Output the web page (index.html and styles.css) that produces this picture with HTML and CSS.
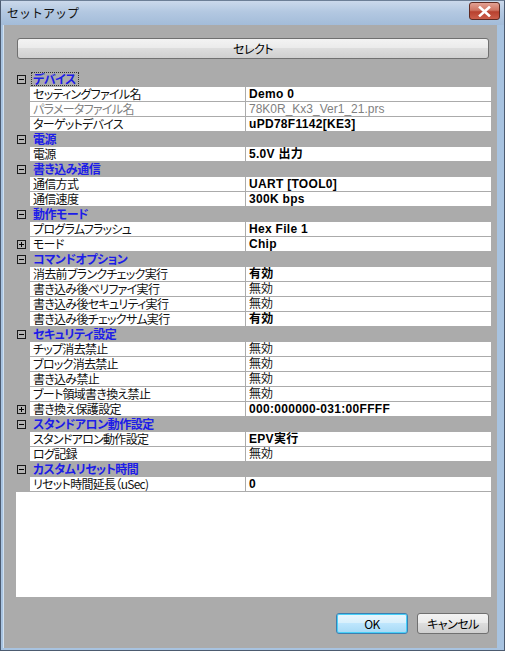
FILE: index.html
```html
<!DOCTYPE html>
<html lang="ja">
<head>
<meta charset="utf-8">
<title>セットアップ</title>
<link rel="stylesheet" href="styles.css">
</head>
<body>
<div class="window">
  <div class="titlebar">
    <span class="title">セットアップ</span>
    <div class="close">
      <svg width="13" height="11" viewBox="0 0 13 11"><path d="M2 1.5 L11 9.5 M11 1.5 L2 9.5" stroke="#ffffff" stroke-width="2.6" stroke-linecap="square"/></svg>
    </div>
  </div>
  <div class="client">
    <div class="btn select">セレクト</div>
    <div class="grid">
      <div class="row cat"><span class="gutter"><span class="box minus"></span></span><span class="catlabel focus">デバイス</span></div>
      <div class="row"><span class="gutter"></span><span class="name">セッティングファイル名</span><span class="value b">Demo 0</span></div>
      <div class="row"><span class="gutter"></span><span class="name dim">パラメータファイル名</span><span class="value dim">78K0R_Kx3_Ver1_21.prs</span></div>
      <div class="row"><span class="gutter"></span><span class="name">ターゲットデバイス</span><span class="value b">uPD78F1142[KE3]</span></div>
      <div class="row cat"><span class="gutter"><span class="box minus"></span></span><span class="catlabel">電源</span></div>
      <div class="row"><span class="gutter"></span><span class="name">電源</span><span class="value b">5.0V 出力</span></div>
      <div class="row cat"><span class="gutter"><span class="box minus"></span></span><span class="catlabel">書き込み通信</span></div>
      <div class="row"><span class="gutter"></span><span class="name">通信方式</span><span class="value b">UART [TOOL0]</span></div>
      <div class="row"><span class="gutter"></span><span class="name">通信速度</span><span class="value b">300K bps</span></div>
      <div class="row cat"><span class="gutter"><span class="box minus"></span></span><span class="catlabel">動作モード</span></div>
      <div class="row"><span class="gutter"></span><span class="name">プログラムフラッシュ</span><span class="value b">Hex File 1</span></div>
      <div class="row"><span class="gutter"><span class="box plus"></span></span><span class="name">モード</span><span class="value b">Chip</span></div>
      <div class="row cat"><span class="gutter"><span class="box minus"></span></span><span class="catlabel">コマンドオプション</span></div>
      <div class="row"><span class="gutter"></span><span class="name">消去前ブランクチェック実行</span><span class="value b">有効</span></div>
      <div class="row"><span class="gutter"></span><span class="name">書き込み後ベリファイ実行</span><span class="value">無効</span></div>
      <div class="row"><span class="gutter"></span><span class="name">書き込み後セキュリティ実行</span><span class="value">無効</span></div>
      <div class="row"><span class="gutter"></span><span class="name">書き込み後チェックサム実行</span><span class="value b">有効</span></div>
      <div class="row cat"><span class="gutter"><span class="box minus"></span></span><span class="catlabel">セキュリティ設定</span></div>
      <div class="row"><span class="gutter"></span><span class="name">チップ消去禁止</span><span class="value">無効</span></div>
      <div class="row"><span class="gutter"></span><span class="name">ブロック消去禁止</span><span class="value">無効</span></div>
      <div class="row"><span class="gutter"></span><span class="name">書き込み禁止</span><span class="value">無効</span></div>
      <div class="row"><span class="gutter"></span><span class="name">ブート領域書き換え禁止</span><span class="value">無効</span></div>
      <div class="row"><span class="gutter"><span class="box plus"></span></span><span class="name">書き換え保護設定</span><span class="value b">000:000000-031:00FFFF</span></div>
      <div class="row cat"><span class="gutter"><span class="box minus"></span></span><span class="catlabel">スタンドアロン動作設定</span></div>
      <div class="row"><span class="gutter"></span><span class="name">スタンドアロン動作設定</span><span class="value b">EPV実行</span></div>
      <div class="row"><span class="gutter"></span><span class="name">ログ記録</span><span class="value">無効</span></div>
      <div class="row cat"><span class="gutter"><span class="box minus"></span></span><span class="catlabel">カスタムリセット時間</span></div>
      <div class="row"><span class="gutter"></span><span class="name">リセット時間延長（uSec)</span><span class="value b">0</span></div>
      <div class="fill"></div>
    </div>
    <div class="footer">
      <div class="btn default">OK</div>
      <div class="btn">キャンセル</div>
    </div>
  </div>
</div>
</body>
</html>
```

FILE: styles.css
```css
html, body {
  margin: 0;
  padding: 0;
}
body {
  width: 505px;
  height: 651px;
  overflow: hidden;
  font-family: "Liberation Sans", "Noto Sans CJK JP", sans-serif;
  font-size: 12px;
  font-feature-settings: "palt";
  color: #000;
}
.window {
  box-sizing: border-box;
  width: 505px;
  height: 651px;
  display: flex;
  flex-direction: column;
  background: #a8c3e0;
  border: 1px solid #4c5b70;
  border-top: 1px solid #6d7f96;
}
.titlebar {
  height: 24px;
  flex: none;
  display: flex;
  align-items: center;
  justify-content: space-between;
  background: linear-gradient(#cbd9eb, #b3c8e1 45%, #a3bcd9);
  padding-left: 6px;
}
.title {
  font-family: "Noto Sans CJK JP", sans-serif;
  font-feature-settings: normal;
  font-size: 12px;
  color: #111;
  line-height: 14px;
  margin-top: -1px;
}
.close {
  box-sizing: border-box;
  width: 31px;
  height: 18px;
  margin-right: 4px;
  margin-top: -4px;
  border: 1px solid #5e2a22;
  border-radius: 3px;
  background: linear-gradient(#e3a193, #cf7563 45%, #b8412f 55%, #cc5e4a);
  display: flex;
  align-items: center;
  justify-content: center;
}
.client {
  flex: 1;
  display: flex;
  flex-direction: column;
  background: #ababab;
  margin: 0 7px 2px 2px;
  padding: 13px 6px 14px 12px;
  border-left: 1px solid #d2e2f2;
}
.btn {
  box-sizing: border-box;
  height: 21px;
  border: 1px solid #707070;
  border-radius: 3px;
  background: linear-gradient(#f3f3f3, #ebebeb 45%, #dddddd 50%, #cfcfcf);
  display: flex;
  align-items: center;
  justify-content: center;
  font-family: "Noto Sans CJK JP", sans-serif;
  font-size: 12px;
  line-height: 14px;
  letter-spacing: -0.5px;
  color: #000;
}
.select {
  margin: 0 2px 0 1px;
  flex: none;
}
.grid {
  flex: 1;
  margin-top: 13px;
  display: flex;
  flex-direction: column;
  background: #ababab;
}
.row {
  box-sizing: border-box;
  height: 15px;
  flex: none;
  display: flex;
  border-bottom: 1px solid #ababab;
  font-family: "Noto Sans CJK JP", sans-serif;
  line-height: 14px;
}
.gutter {
  width: 14px;
  flex: none;
  display: flex;
  align-items: center;
  padding-left: 1px;
  box-sizing: border-box;
}
.box {
  position: relative;
  box-sizing: border-box;
  width: 9px;
  height: 9px;
  border: 1px solid #1a1a1a;
  background: #b4b4b4;
}
.box::before {
  content: "";
  position: absolute;
  left: 1px;
  top: 3px;
  width: 5px;
  height: 1px;
  background: #000;
}
.box.plus::after {
  content: "";
  position: absolute;
  left: 3px;
  top: 1px;
  width: 1px;
  height: 5px;
  background: #000;
}
.name {
  width: 215px;
  flex: none;
  background: #fff;
  padding-left: 3px;
  box-sizing: border-box;
  white-space: nowrap;
  letter-spacing: -0.7px;
  color: #111;
}
.value {
  flex: 1;
  background: #fff;
  border-left: 1px solid #ababab;
  padding-left: 3px;
  white-space: nowrap;
  font-family: "Liberation Sans", "Noto Sans CJK JP", sans-serif;
  color: #111;
}
.value.b {
  font-weight: bold;
  letter-spacing: 0.3px;
  color: #000;
}
.dim,
.value.dim {
  color: #7f7f7f;
}
.catlabel {
  color: #1c1ce8;
  font-weight: bold;
  padding: 0 2px 0 2px;
  margin-left: 1px;
  white-space: nowrap;
  box-sizing: border-box;
  height: 14px;
  letter-spacing: -0.5px;
}
.catlabel.focus {
  outline: 1px dotted #333;
  outline-offset: -1px;
  padding-right: 3px;
}
.fill {
  flex: 1;
  background: #fff;
}
.footer {
  flex: none;
  display: flex;
  justify-content: flex-end;
  gap: 9px;
  margin-top: 16px;
  padding-right: 2px;
}
.footer .btn {
  width: 72px;
}
.footer .btn.default {
  border-color: #3c7fb1;
  box-shadow: inset 0 0 0 1px #48d0f8;
  background: linear-gradient(#eaf6fd, #d9f0fc 45%, #bee6fd 50%, #a7d9f5);
}
```
